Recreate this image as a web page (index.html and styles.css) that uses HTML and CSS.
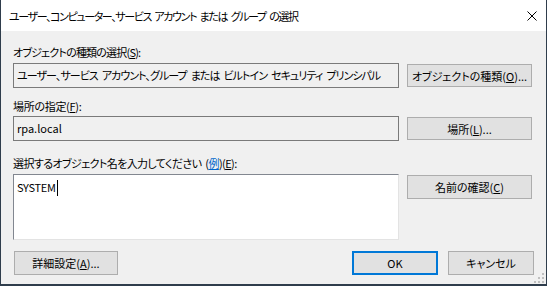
FILE: index.html
```html
<!DOCTYPE html>
<html lang="ja">
<head>
<meta charset="utf-8">
<link rel="stylesheet" href="styles.css">
</head>
<body>
<div class="window">
  <div class="titlebar">
    <span class="title">ユーザー、コンピューター、サービス アカウント または グループ の選択</span>
    <svg class="close" width="10" height="10" viewBox="0 0 10 10"><path d="M0.5 0.5 L9.5 9.5 M9.5 0.5 L0.5 9.5" stroke="#000" stroke-width="1" fill="none"/></svg>
  </div>
  <div class="content">
    <div class="label l1">オブジェクトの種類の選択(<u>S</u>):</div>
    <div class="row r1">
      <div class="field ro">ユーザー、サービス アカウント、グループ または ビルトイン セキュリティ プリンシパル</div>
      <button class="btn side">オブジェクトの種類(<u>O</u>)...</button>
    </div>
    <div class="label l2">場所の指定(<u>F</u>):</div>
    <div class="row r2">
      <div class="field ro latin">rpa.local</div>
      <button class="btn side">場所(<u>L</u>)...</button>
    </div>
    <div class="label l3">選択するオブジェクト名を入力してください (<a class="link">例</a>)(<u>E</u>):</div>
    <div class="row r3">
      <div class="field area">SYSTEM<span class="caret"></span></div>
      <button class="btn side">名前の確認(<u>C</u>)</button>
    </div>
    <div class="footer">
      <button class="btn adv">詳細設定(<u>A</u>)...</button>
      <div class="spacer"></div>
      <button class="btn ok">OK</button>
      <button class="btn cancel">キャンセル</button>
    </div>
  </div>
  <svg class="grip" width="10" height="10" viewBox="0 0 10 10">
    <rect x="8" y="0" width="2" height="2" fill="#bfbfbf"/>
    <rect x="4" y="4" width="2" height="2" fill="#bfbfbf"/>
    <rect x="8" y="4" width="2" height="2" fill="#bfbfbf"/>
    <rect x="0" y="8" width="2" height="2" fill="#bfbfbf"/>
    <rect x="4" y="8" width="2" height="2" fill="#bfbfbf"/>
    <rect x="8" y="8" width="2" height="2" fill="#bfbfbf"/>
  </svg>
</div>
</body>
</html>
```
FILE: styles.css
```css
* { box-sizing: border-box; }
html, body { margin: 0; padding: 0; background: #2f3b48; }
body {
  font-family: "Noto Sans CJK JP", "Noto Sans", sans-serif;
  font-feature-settings: "palt";
  font-size: 11px;
  color: #000;
}
.window {
  position: relative;
  width: 547px;
  height: 286px;
  border-style: solid;
  border-color: #2f3d4c;
  border-width: 0 1px 2px 1px;
  background: #f0f0f0;
  display: flex;
  flex-direction: column;
}
.titlebar {
  height: 31px;
  background: #fff;
  display: flex;
  align-items: center;
  justify-content: space-between;
  padding: 0 9px 0 8px;
  flex: none;
}
.title { font-size: 11px; line-height: 16px; letter-spacing: -1.4px; word-spacing: 2.5px; }
.close { display: block; }
.content {
  flex: 1;
  padding: 0 12px;
  display: flex;
  flex-direction: column;
}
.label { height: 16px; line-height: 16px; white-space: nowrap; letter-spacing: -0.8px; }
.l2 { letter-spacing: -0.3px; }
.l3 { letter-spacing: -0.6px; word-spacing: 2px; }
.l1 { margin-top: 13px; margin-bottom: 3px; }
.l2 { margin-top: 10px; margin-bottom: 2px; }
.l3 { margin-top: 14px; margin-bottom: 3px; }
.row {
  display: grid;
  grid-template-columns: 386px 125px;
  column-gap: 8px;
  align-items: center;
}
.r3 { align-items: start; }
.field {
  height: 25px;
  border: 1px solid #7a7a7a;
  padding: 0 3px;
  line-height: 23px;
  white-space: nowrap;
  overflow: hidden;
}
.ro { background: #f0f0f0; letter-spacing: -0.95px; word-spacing: 2.5px; }
.ro.latin { letter-spacing: 0; word-spacing: 0; }
.area {
  height: 66px;
  background: #fff;
  border-color: #828790 #e3e3e3 #e3e3e3 #828790;
  line-height: 22px;
  padding-top: 1px;
  letter-spacing: -0.3px;
}
.caret {
  display: inline-block;
  width: 1px;
  height: 16px;
  background: #000;
  vertical-align: -4px;
  margin-left: 1px;
}
.btn {
  font: inherit;
  font-feature-settings: "palt";
  color: #000;
  background: #e1e1e1;
  border: 1px solid #adadad;
  padding: 0;
  margin: 0;
  height: 23px;
  line-height: 20px;
  text-align: center;
  white-space: nowrap;
}
.r3 .btn { height: 24px; margin-top: 1px; }
.footer {
  display: flex;
  align-items: center;
  margin-top: 11px;
  padding-left: 1px;
}
.footer .btn { height: 24px; }
.adv { width: 104px; }
.spacer { flex: 1; }
.ok { width: 86px; border: 2px solid #0078d7; margin-right: 10px; }
.cancel { width: 86px; }
.link { color: #0066cc; text-decoration: underline; }
.grip { position: absolute; right: 2px; bottom: 1px; }
```
